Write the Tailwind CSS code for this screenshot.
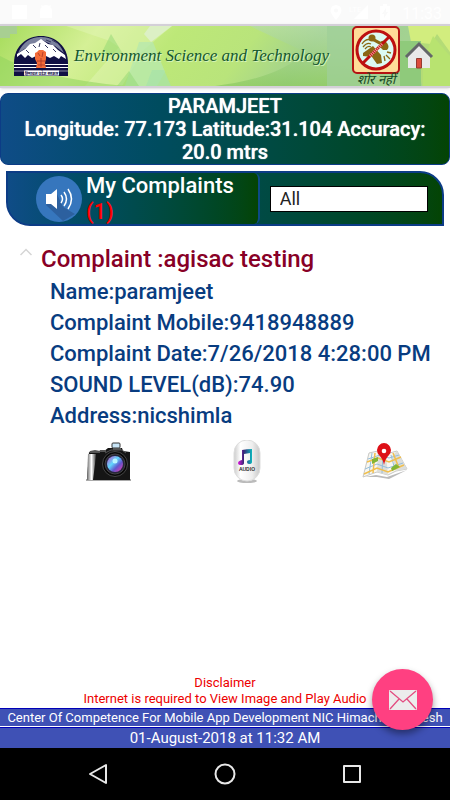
<!DOCTYPE html>
<html lang="en">
<head>
<meta charset="utf-8">
<meta name="viewport" content="width=device-width, initial-scale=1">
<title>My Complaints</title>
<script src="https://cdn.jsdelivr.net/npm/@tailwindcss/browser@4"></script>
</head>
<body class="flex min-h-screen flex-col bg-white font-['Roboto',sans-serif]">
<!-- Status bar -->
<div class="flex h-6 items-center justify-between bg-[#fafafa] pr-2 pl-3 text-white">
  <svg class="h-4 w-11" viewBox="0 0 44 16" fill="currentColor" aria-hidden="true"><path d="M0 1h15v14H0zM28 7a6 6 0 0 1 12 0v7H28zM30 1l3 4-1 1-3-4zM38 1l1 1-3 4-1-1z"/></svg>
  <div class="flex items-center gap-2">
    <svg class="h-4 w-16" viewBox="0 0 64 16" fill="currentColor" aria-hidden="true"><path fill-rule="evenodd" d="M6 1a5.500 5.500 0 0 1 5.500 5.500C11.500 10 6 16 6 16S.5 10 .5 6.500A5.500 5.500 0 0 1 6 1m0 3.500a2 2 0 1 0 0 4 2 2 0 0 0 0-4"/><path d="M38 1v14H24z"/><path fill-rule="evenodd" d="M50 2h3V0h4v2h3v14H50zm6 2-4 6h2v4l4-6h-2z"/><text x="19" y="8" font-size="8" font-family="Roboto">LTE</text></svg>
    <span class="pt-1 text-base leading-5">11:33</span>
  </div>
</div>
<!-- Banner -->
<header class="relative flex h-16 items-center border-y-2 border-[#d4d0d8] pr-4 pl-[14px] shadow-sm">
  <svg class="absolute inset-0 h-full w-full" viewBox="0 0 450 60" preserveAspectRatio="none" aria-hidden="true">
    <defs>
      <linearGradient id="grass" x2="1" y2=".1"><stop offset="0" stop-color="#a6dc5c"/><stop offset=".22" stop-color="#d5f096"/><stop offset=".4" stop-color="#bde878"/><stop offset=".58" stop-color="#b9e47b"/><stop offset=".72" stop-color="#a2d28c"/><stop offset="1" stop-color="#b4dc76"/></linearGradient>
      <linearGradient id="fade" x2="0" y2="1"><stop offset="0" stop-color="#b5dab0" stop-opacity=".6"/><stop offset="1" stop-color="#8bc960" stop-opacity=".7"/></linearGradient>
    </defs>
    <path fill="url(#grass)" d="M0 0h450v60H0z"/>
    <path fill="#a8cf92" d="M0 0h17v8H10v4H0z"/>
    <path fill="#e6f7bd" opacity=".4" d="M66 0h106l-38 32-24-17zM85 60l35-40 20 10-18 30z"/>
    <path fill="#b8e8ac" opacity=".8" d="m139 16 14 0 12 30-8 14h-32z"/>
    <path fill="#91d874" opacity=".5" d="m101 28 10-20 12 20zM117 60l12-15 10 15z"/>
    <path fill="#dcf0c5" d="M150 0h22l-21 16-7-8z"/>
    <path fill="#a7e2aa" opacity=".7" d="M152 44h12l7 16h-25z"/>
    <path fill="#8fd35c" opacity=".55" d="M0 30Q40 52 125 60H0z"/>
    <path fill="url(#fade)" d="M250 0h110v60H215q65-8 90-34z"/>
    <path fill="#9fcf98" opacity=".75" d="M327 0h83l12 60h-95z"/>
    <path fill="#d2ed7e" d="M408 0h42v26l-13-18-6 10-20-2z"/>
    <path fill="#8fca7b" d="M400 15h21v45h-21z"/>
    <path fill="#b8e370" d="m433 10 17 20v30h-27V35z"/>
  </svg>
  <svg class="relative h-10 w-[54px] shrink-0" viewBox="0 0 54 40" role="img" aria-label="Himachal Pradesh emblem">
    <path fill="#101044" d="M0 27C0 10 13 0 27 0s27 10 27 27v13H0z"/>
    <path fill="#7b829e" d="M4 17Q11 1 27 1T50 17l-9-7-13-6-13 6z"/>
    <path fill="#fff" d="m3 18 8-5 5-5 5-1 6-4 7 5 5 1 5 5 7 5 1 4-5-3-2 3-5-3-4 2-4-2-5 2-5-2-4 2-4-3-3 3-4-4-4 3z"/>
    <path d="m19 9 3 3m4-5-1 4m6-2 3 3m5 1 3 3M12 14l3 3M32 4l5 2m1-2 5 3" stroke="#35385e" fill="none"/>
    <path d="M0 28.500h54M0 31.500h54" stroke="#fff"/>
    <path fill="#f46b38" d="m23 16 2-2h4l3 2v7l-1 4 1 5H22l1-5-2-4v-6z"/>
    <path d="m24 17 2 3m3-4-1 5m-5 4h8m-7 4h7m-4-7v9" stroke="#a83528" stroke-width=".8"/>
    <path fill="#fff" d="M10 34.500h35v5H10z"/><path stroke="#fff" stroke-width=".5" d="M0 35h54"/>
    <text x="27.500" y="38.500" text-anchor="middle" font-family="Noto Sans, sans-serif" font-weight="700" font-size="4" fill="#101044">हिमाचल प्रदेश सरकार</text>
  </svg>
  <h1 class="relative ml-[6px] flex-1 text-[17px] leading-6 whitespace-nowrap text-[#15582e] italic [font-family:'Liberation_Serif',serif] [text-shadow:1px_1px_0_#d7f3bd]">Environment Science and Technology</h1>
  <div class="relative flex flex-col items-center">
    <svg class="h-12 w-12" viewBox="0 0 48 48" aria-hidden="true">
      <rect x="1" y="1" width="46" height="46" rx="4" fill="#ffdc98" stroke="#b41313" stroke-width="2"/>
      <circle cx="24" cy="24" r="19" fill="#dcfaf3"/>
      <g fill="#8a6814"><circle cx="20" cy="12" r="3.500"/><path d="m20 11 9 5-1 3-9-5zM28 16q4-3 7 1t0 7l-4 0-4-4zM11 27l10-7 8 9 1 8-5 1-5-7-9-1z"/></g>
      <path d="M10 18q4-6 9-4M11 21q4-5 8-3M13 23q3-4 6-2M35 26l4 1m-5 2 4 4m-6-3 1 5" fill="none" stroke="#8a6814" stroke-width="1.300"/>
      <circle cx="24" cy="24" r="19" fill="none" stroke="#bd1010" stroke-width="3"/>
      <path d="M11 37 37 11" stroke="#bd1010" stroke-width="3"/><path d="m18 30 12-12" stroke="#f1a4a0" stroke-width="3" stroke-dasharray="1 1"/>
    </svg>
    <span class="text-[13px] leading-3 text-[#174724] italic">शोर नहीं</span>
  </div>
  <a href="#" aria-label="Home" class="relative ml-1"><svg class="h-[30px] w-[30px]" viewBox="1 2 30 28" aria-hidden="true"><path fill="#e9e9e9" d="M5 14 16 5l11 9v14H5z"/><path d="M3 17 16 4l13 13" fill="none" stroke="#646669" stroke-width="3"/><path fill="#dd4d3d" stroke="#963b31" d="M13.500 18.500h5V28h-5z"/></svg></a>
</header>
<!-- Position -->
<section class="mt-[5px] rounded-lg border border-[#0c3c86] bg-linear-to-r from-[#0f4c87] to-[#044404] px-4 pt-px text-center text-xl leading-[23px] font-medium text-white [text-shadow:0_0_1px_#fff]">
  <p>PARAMJEET</p>
  <p>Longitude: 77.173 Latitude:31.104 Accuracy: 20.0 mtrs</p>
</section>
<!-- Heading and filter -->
<section class="mx-[6px] mt-[6px] flex h-[55px] overflow-hidden rounded-tr-[24px] rounded-bl-[24px] border-2 border-[#0c3c86] bg-linear-to-r from-[#0f4c87] to-[#044404]">
  <div class="flex w-[58%] items-center gap-1 rounded-r-md border-r-2 border-[#0c4a86] bg-linear-to-r from-[#0f4c87] to-[#044404] pl-7">
    <svg class="h-[46px] w-[46px] shrink-0" viewBox="0 0 46 46" aria-hidden="true"><circle cx="23" cy="23" r="23" fill="#3676bd"/><path fill="#2c609f" d="m10 29 17 16 12-7-12-7-7-15z"/><path fill="#fff" d="M10 18h5l6-5v20l-6-5h-5z"/><path d="M25 19q3 4 0 8m3-11q5 7 0 14m4-17q7 10 0 20" fill="none" stroke="#fff" stroke-width="1.500"/></svg>
    <h2 class="text-[22px] leading-[26px] font-medium text-white">My Complaints <span class="block text-[#f00]">(1)</span></h2>
  </div>
  <div class="flex flex-1 items-center pr-[14px] pl-[10px]">
    <select aria-label="Complaint filter" class="h-[26px] w-full appearance-none border border-black bg-white px-[9px] text-lg leading-6 text-[#222] outline-none"><option>All</option></select>
  </div>
</section>
<!-- Complaint -->
<main class="flex-1">
  <article class="pt-4">
    <div class="flex pl-5">
      <button aria-label="Collapse complaint" class="flex h-6 w-[21px] items-start pt-[6px]"><svg class="h-2 w-3" viewBox="0 0 12 8" fill="none" stroke="#d5d5d5" stroke-width="1.500" aria-hidden="true"><path d="m.5 7 5.500-5.500L11.500 7"/></svg></button>
      <h3 class="text-2xl leading-[34px] font-medium text-[#880026]">Complaint :agisac testing</h3>
    </div>
    <div class="pl-[50px] text-[22px] leading-[31px] font-medium whitespace-nowrap text-[#083c80]">
      <p>Name:paramjeet</p>
      <p>Complaint Mobile:9418948889</p>
      <p>Complaint Date:7/26/2018 4:28:00 PM</p>
      <p>SOUND LEVEL(dB):74.90</p>
      <p>Address:nicshimla</p>
    </div>
    <div class="mt-[9px] flex items-start justify-between pr-[41px] pl-[85px]">
      <button aria-label="View image"><svg class="h-11 w-12" viewBox="0 0 48 44" aria-hidden="true">
        <defs><linearGradient id="grip"><stop offset="0" stop-color="#666"/><stop offset=".5" stop-color="#fff"/><stop offset="1" stop-color="#444"/></linearGradient><linearGradient id="lens" x2="1" y2="1"><stop offset="0" stop-color="#bf4ac8"/><stop offset=".4" stop-color="#61d8ff"/><stop offset=".65" stop-color="#6256ce"/><stop offset="1" stop-color="#ff39aa"/></linearGradient></defs>
        <path d="M1 40h45" stroke="#aaa" stroke-width="2"/><path fill="#151515" d="m4 12 14 0 5-4h14l1 3 7 1v28H2z"/>
        <path fill="url(#grip)" d="M3 14h8l-1 10-2 16H2z"/><path fill="#555" d="m5 11 5-1 5 1v2H4zM15 10h6v2h-7z"/>
        <rect x="27" y="3" width="8" height="5" rx="1" fill="#c9e6f8" stroke="#333"/><path d="M28 9h8" stroke="#555" stroke-width="2"/>
        <path d="m20 13 6-3h11l4 3" fill="none" stroke="#555"/><circle cx="30" cy="24" r="12.500" fill="#080808" stroke="#444"/><circle cx="30" cy="24" r="10" fill="#25253b" stroke="#444"/><circle cx="30" cy="24" r="8" fill="url(#lens)"/><circle cx="30" cy="21" r="2.500" fill="#b9f5ff"/>
      </svg></button>
      <button aria-label="Play audio"><svg class="h-11 w-8" viewBox="0 0 32 44" aria-hidden="true">
        <defs><linearGradient id="capsule" x2="1"><stop offset="0" stop-color="#ccc"/><stop offset=".25" stop-color="#fff"/><stop offset=".7" stop-color="#eee"/><stop offset="1" stop-color="#c6c6c6"/></linearGradient><linearGradient id="note" x2="1"><stop offset="0" stop-color="#e019df"/><stop offset=".4" stop-color="#392677"/><stop offset="1" stop-color="#0bb7bd"/></linearGradient></defs>
        <ellipse cx="16" cy="41" rx="10" ry="2" fill="#bbb"/><rect x="3" y="0" width="26" height="41" rx="13" fill="url(#capsule)" stroke="#ddd"/>
        <path fill="url(#note)" d="M11 10q5-1 10-1v13q0 2-3 2-2 0-2-2t3-2v-7l-6 1v9q0 2-3 2t-3-2 4-3z"/>
        <text x="16" y="31" text-anchor="middle" font-family="Roboto" font-weight="500" font-size="5.500" fill="#222">AUDIO</text>
      </svg></button>
      <button aria-label="Open map"><svg class="h-11 w-12" viewBox="0 0 48 44" aria-hidden="true">
        <path fill="#bbb" d="m4 37 11-2 11 2 20-7-18 9-12-2z"/>
        <path fill="#f8f7f1" stroke="#c8c8c5" d="m8 13 9-2 8 3 11-3 10 18-11 2-8 4-11-3-14 5z"/><path fill="#dddeda" d="m17 11 8 3 2 21-11-3zM36 11l10 18-11 2-4-15z"/>
        <path d="m7 19 12-4 9 3 10-3M4 29l12-5 11 4 15-5M11 13 8 34M22 13l-1 20M30 15l4 15" fill="none" stroke="#95bedc"/><path d="m6 22 11-4 11 4 12-5M3 34l13-6 11 4 16-7M14 13l-2 20M32 13l6 15" fill="none" stroke="#f0bf4e" stroke-width="1.500"/>
        <path fill="#82b534" d="m11 19 6-2v4l-6 3zM30 28l5-4 4 3-8 4z"/><path fill="#dd1017" d="M23 25q-1-6-5-10a7 7 0 1 1 10 0q-4 4-5 10"/><circle cx="23" cy="11" r="2.300" fill="#fff"/>
      </svg></button>
    </div>
  </article>
</main>
<!-- Footer -->
<footer class="relative">
  <div class="pb-px text-center text-[13px] leading-4 text-[#ed0000]"><p>Disclaimer</p><p>Internet is required to View Image and Play Audio</p></div>
  <p class="border-t border-[#0000b8] bg-[#3f51b5] text-center text-[13px] leading-[17px] whitespace-nowrap text-white">Center Of Competence For Mobile App Development NIC Himachal Pradesh</p>
  <p class="mt-px border-t border-[#0000b8] bg-[#3f51b5] text-center text-[15px] leading-5 text-white">01-August-2018 at 11:32 AM</p>
  <button aria-label="Send message" class="absolute right-[17px] bottom-[18px] flex h-[61px] w-[61px] items-center justify-center rounded-full bg-[#ff4081] shadow-[0_4px_7px_#0006]"><svg class="h-5 w-7" viewBox="0 0 28 20" aria-hidden="true"><rect x="0" y="0" width="28" height="20" rx="1" fill="#ececec"/><path d="m1 1 13 11L27 1M1 19l9-10m17 10-9-10" fill="none" stroke="#e34c80" stroke-width="1.300"/></svg></button>
</footer>
<!-- Device navigation -->
<nav aria-label="Device" class="flex h-[52px] items-center justify-center gap-[103px] bg-black text-[#e8e8e8]">
  <button aria-label="Back"><svg class="h-6 w-6" viewBox="0 0 24 24" fill="none" stroke="currentColor" stroke-width="2" stroke-linejoin="round" aria-hidden="true"><path d="M20 3v18L4 12z"/></svg></button>
  <button aria-label="Home screen"><svg class="h-6 w-6" viewBox="0 0 24 24" fill="none" stroke="currentColor" stroke-width="2" aria-hidden="true"><circle cx="12" cy="12" r="9.500"/></svg></button>
  <button aria-label="Recent apps"><svg class="h-6 w-6" viewBox="0 0 24 24" fill="none" stroke="currentColor" stroke-width="2" stroke-linejoin="round" aria-hidden="true"><path d="M4 4h16v16H4z"/></svg></button>
</nav>
</body>
</html>
